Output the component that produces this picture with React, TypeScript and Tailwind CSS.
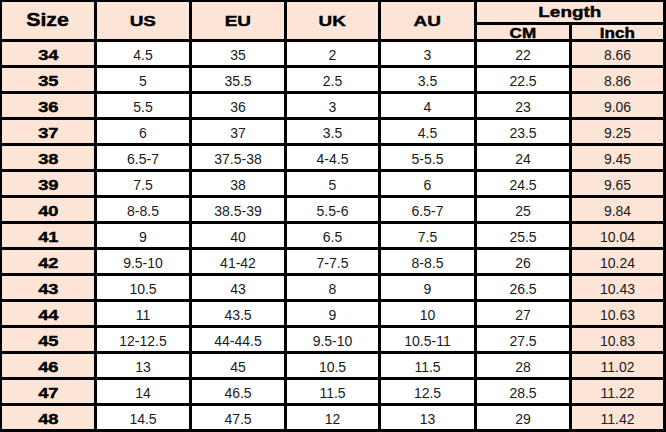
import React from "react";

const rows: string[][] = [
  ["34", "4.5", "35", "2", "3", "22", "8.66"],
  ["35", "5", "35.5", "2.5", "3.5", "22.5", "8.86"],
  ["36", "5.5", "36", "3", "4", "23", "9.06"],
  ["37", "6", "37", "3.5", "4.5", "23.5", "9.25"],
  ["38", "6.5-7", "37.5-38", "4-4.5", "5-5.5", "24", "9.45"],
  ["39", "7.5", "38", "5", "6", "24.5", "9.65"],
  ["40", "8-8.5", "38.5-39", "5.5-6", "6.5-7", "25", "9.84"],
  ["41", "9", "40", "6.5", "7.5", "25.5", "10.04"],
  ["42", "9.5-10", "41-42", "7-7.5", "8-8.5", "26", "10.24"],
  ["43", "10.5", "43", "8", "9", "26.5", "10.43"],
  ["44", "11", "43.5", "9", "10", "27", "10.63"],
  ["45", "12-12.5", "44-44.5", "9.5-10", "10.5-11", "27.5", "10.83"],
  ["46", "13", "45", "10.5", "11.5", "28", "11.02"],
  ["47", "14", "46.5", "11.5", "12.5", "28.5", "11.22"],
  ["48", "14.5", "47.5", "12", "13", "29", "11.42"],
];

function Bold({ children, size }: { children: React.ReactNode; size: string }) {
  return (
    <span
      className={`inline-block font-bold text-black leading-none scale-x-[1.22] [-webkit-text-stroke:0.4px_black] ${size}`}
    >
      {children}
    </span>
  );
}

export default function App() {
  return (
    <div
      className="w-[666px] h-[432px] bg-black grid grid-cols-[92px_92px_92px_91px_93px_92px_91px] grid-rows-[20px_14px_repeat(15,23px)] gap-[3px] pl-[2px] pt-[2px] pr-[3px] pb-[3px]"
      style={{ fontFamily: '"Liberation Sans", Arial, sans-serif' }}
    >
      <div className="row-span-2 bg-[#fce4d6] flex items-center justify-center">
        <Bold size="text-[17.5px]">Size</Bold>
      </div>
      {["US", "EU", "UK", "AU"].map((h) => (
        <div key={h} className="row-span-2 bg-[#fce4d6] flex items-center justify-center">
          <Bold size="text-[15.5px]">{h}</Bold>
        </div>
      ))}
      <div className="col-span-2 bg-[#fce4d6] flex items-center justify-center">
        <Bold size="text-[15.5px]">Length</Bold>
      </div>
      <div className="bg-[#fce4d6] flex items-center justify-center pt-[1px]">
        <Bold size="text-[14px]">CM</Bold>
      </div>
      <div className="bg-[#fce4d6] flex items-center justify-center pt-[1px]">
        <Bold size="text-[14px]">Inch</Bold>
      </div>
      {rows.map((r) =>
        r.map((v, i) => {
          if (i === 0) {
            return (
              <div key={r[0] + "-" + i} className="bg-[#fce4d6] flex items-center justify-center pt-[1px]">
                <Bold size="text-[15px]">{v}</Bold>
              </div>
            );
          }
          return (
            <div
              key={r[0] + "-" + i}
              className={`${i === 6 ? "bg-[#fce4d6]" : "bg-white"} flex items-center justify-center pt-[2px] text-[14px] leading-none text-[#1a1a1a]`}
            >
              {v}
            </div>
          );
        })
      )}
    </div>
  );
}
